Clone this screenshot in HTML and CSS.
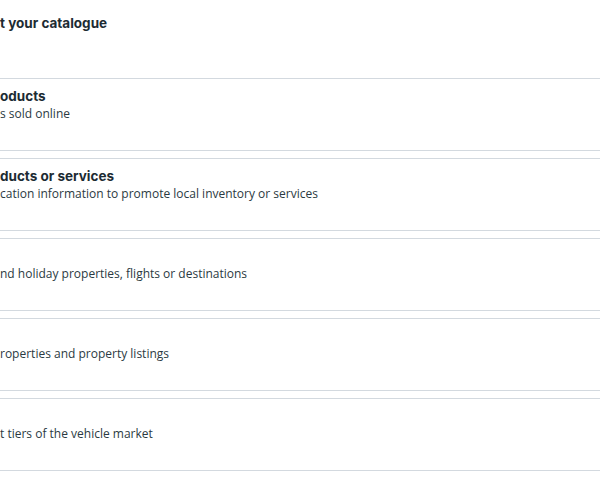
FILE: index.html
```html
<!DOCTYPE html>
<html lang="en">
<head>
    <meta charset="UTF-8">
    <meta name="viewport" content="width=device-width, initial-scale=1.0">
    <title>Catalogue type</title>
    <link rel="stylesheet" href="styles.css">
</head>
<body>

    <div class="page">
        <h2 class="page-title">t your catalogue</h2>

        <div class="type-list">
            <div class="type-card">
                <div class="type-name">oducts</div>
                <div class="type-desc">s sold online</div>
            </div>
            <div class="type-card">
                <div class="type-name">ducts or services</div>
                <div class="type-desc">cation information to promote local inventory or services</div>
            </div>
            <div class="type-card">
                <div class="type-name"></div>
                <div class="type-desc">nd holiday properties, flights or destinations</div>
            </div>
            <div class="type-card">
                <div class="type-name"></div>
                <div class="type-desc">roperties and property listings</div>
            </div>
            <div class="type-card">
                <div class="type-name"></div>
                <div class="type-desc">t tiers of the vehicle market</div>
            </div>
        </div>
    </div>

</body>
</html>
```

FILE: styles.css
```css
body {
    margin: 0;
    background: #fff;
    color: #1c2b33;
    font-family: 'Open Sans', sans-serif;
}

.page {
    padding-top: 13px;
}

.page-title {
    margin: 0 0 45px;
    font-family: 'Inter', sans-serif;
    font-size: 13.5px;
    font-weight: 700;
    line-height: 20px;
    white-space: nowrap;
}

.type-list {
    display: flex;
    flex-direction: column;
    gap: 7px;
}

.type-card {
    box-sizing: border-box;
    height: 73px;
    padding-top: 8px;
    border-top: 1px solid #d3d9df;
    border-bottom: 1px solid #d3d9df;
}

.type-name {
    height: 18px;
    font-family: 'Inter', sans-serif;
    font-size: 13.5px;
    font-weight: 700;
    line-height: 18px;
    white-space: nowrap;
}

.type-desc {
    font-size: 12px;
    line-height: 17px;
    color: #2b3a42;
    white-space: nowrap;
}
```
